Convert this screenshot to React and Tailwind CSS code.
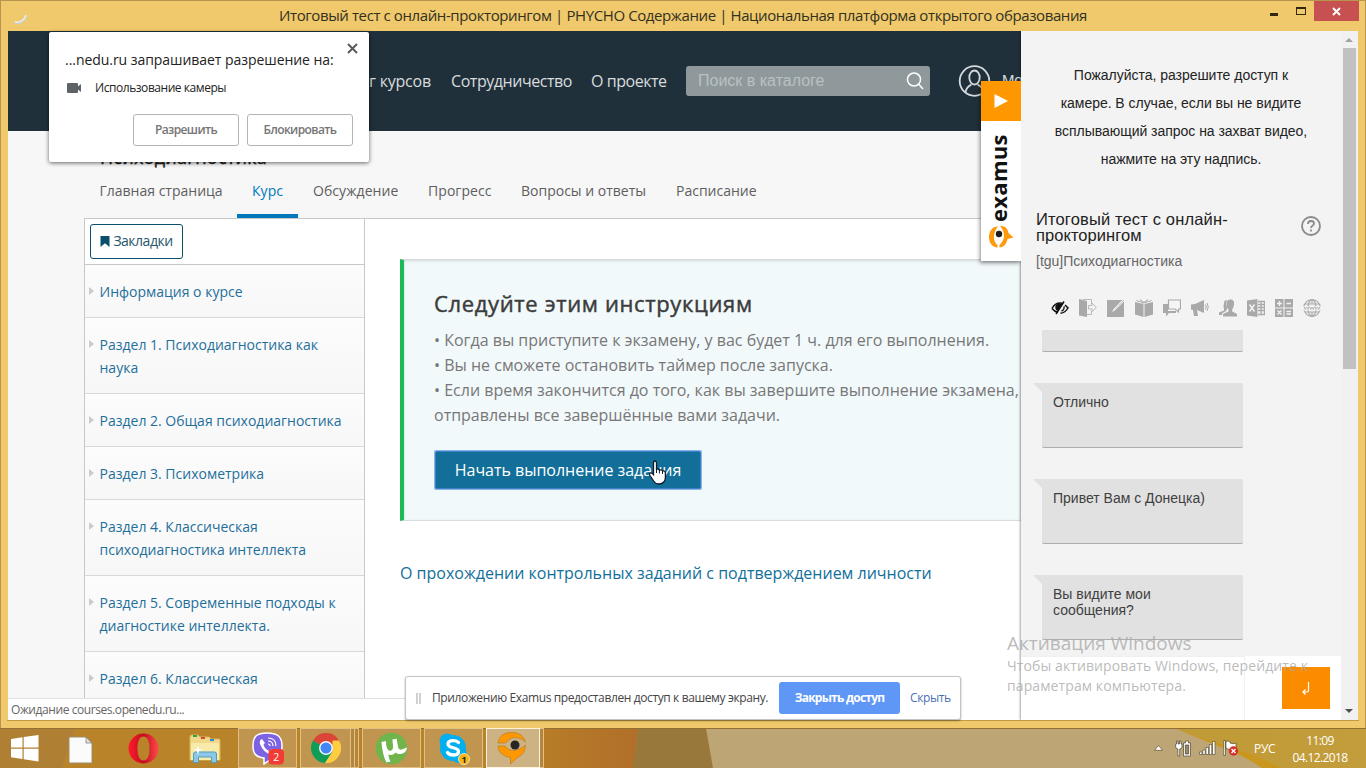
import React from "react";

const sections = [
  ["Информация о курсе"],
  ["Раздел 1. Психодиагностика как", "наука"],
  ["Раздел 2. Общая психодиагностика"],
  ["Раздел 3. Психометрика"],
  ["Раздел 4. Классическая", "психодиагностика интеллекта"],
  ["Раздел 5. Современные подходы к", "диагностике интеллекта."],
  ["Раздел 6. Классическая"],
];

function TitleBar() {
  return (
    <div className="relative flex h-[30px] shrink-0 items-center justify-center">
      <svg className="absolute left-[12px] top-[11px]" width="16" height="14" viewBox="0 0 16 14" fill="none">
        <path d="M13 3 C12 9 7 12 1.500 10.500" stroke="#cfcfc6" strokeWidth="2.600" />
        <path d="M13 3 C11.500 8 7 11 2 9.800" stroke="#f4f2e6" strokeWidth="1.200" />
      </svg>
      <span className="whitespace-nowrap pb-[2px] text-[15px] leading-[20px] tracking-[-0.400px] text-[#33301f]">
        Итоговый тест с онлайн-прокторингом | PHYCHO Содержание | Национальная платформа открытого образования
      </span>
      <div className="absolute right-[6px] top-0 flex h-[20px] items-start">
        <div className="mr-[18px] mt-[12px] h-[3px] w-[8px] bg-[#33270d]" />
        <div className="mr-[8px] mt-[6px] h-[8px] w-[10px] border border-t-2 border-[#33270d]" />
        <div className="flex h-[20px] w-[45px] items-center justify-center bg-[#c75050]">
          <svg width="9" height="9" viewBox="0 0 9 9" stroke="#fff" strokeWidth="1.900">
            <path d="M1 1L8 8M8 1L1 8" />
          </svg>
        </div>
      </div>
    </div>
  );
}

function SiteHeader() {
  return (
    <div className="flex h-[100px] shrink-0 items-center bg-[#20303a] text-[16px] tracking-[-0.450px] text-[#d8dcde]">
      <div className="w-[423px] shrink-0 whitespace-nowrap pb-px text-right tracking-[-0.200px]">Каталог курсов</div>
      <div className="ml-[20px] w-[122px] shrink-0 whitespace-nowrap pb-px tracking-[-0.450px]">Сотрудничество</div>
      <div className="ml-[18px] w-[76px] shrink-0 whitespace-nowrap pb-px">О проекте</div>
      <div className="ml-[19px] flex h-[30px] w-[244px] shrink-0 items-center justify-between rounded-[3px] bg-[#8f999b] pl-[12px] pr-[6px]">
        <span className="whitespace-nowrap font-['Liberation_Sans'] text-[16px] tracking-normal text-[#b9c1c3]">Поиск в каталоге</span>
        <svg width="18" height="20" viewBox="0 0 18 20" fill="none" stroke="#fff" strokeWidth="1.500">
          <circle cx="8" cy="8.500" r="6.500" />
          <path d="M12.500 13L17 18" />
        </svg>
      </div>
      <svg className="ml-[28px] shrink-0" width="33" height="32" viewBox="0 0 33 32" fill="none" stroke="#d5d9db" strokeWidth="1.800">
        <circle cx="16.500" cy="16" r="14.800" />
        <ellipse cx="16.500" cy="12.500" rx="5.200" ry="7" />
        <path d="M7.500 27.500C8 23.500 9.500 21.500 13.500 19.500M25.500 27.500C25 23.500 23.500 21.500 19.500 19.500" />
      </svg>
      <span className="ml-[11px] whitespace-nowrap pb-[2px] font-['Liberation_Sans'] text-[15px]">Мо</span>
    </div>
  );
}

function CourseTabs() {
  return (
    <div className="flex h-[87px] shrink-0 flex-col pl-[77px]">
      <div className="h-[47px] overflow-hidden pl-[15px] pt-[14px] text-[18px] font-medium leading-[24px] tracking-[0.250px] text-[#222] [-webkit-text-stroke:0.400px]">
        Психодиагностика
      </div>
      <div className="flex h-[40px] whitespace-nowrap text-[14px] leading-[26px] text-[#5e5e5e]">
        <div className="ml-[14px] w-[123px] pl-[0.500px]">Главная страница</div>
        <div className="ml-[15px] w-[61px] border-b-4 border-[#0079bc] text-center text-[#0079bc]">Курс</div>
        <div className="ml-[15px] w-[85px] tracking-[0.060px]">Обсуждение</div>
        <div className="ml-[30px] w-[63px] tracking-[0.060px]">Прогресс</div>
        <div className="ml-[30px] w-[125px]">Вопросы и ответы</div>
        <div className="ml-[30px]">Расписание</div>
      </div>
    </div>
  );
}

function Sidebar() {
  return (
    <div className="w-[281px] shrink-0 border-x border-[#c8c8c8] bg-white">
      <div className="h-[46px] border-b border-[#c8c8c8] pl-[5px] pt-[5px]">
        <div className="flex h-[35px] w-[93px] items-center justify-center gap-[3px] rounded-[3px] border border-[#0b4f6c] text-[14px] tracking-[-0.500px] text-[#27566b]">
          <svg width="10" height="11" viewBox="0 0 10 11" fill="#0b4f6c"><path d="M0.500 0H9.500V11L5 7.300L0.500 11Z" /></svg>
          <span className="pb-[3px]">Закладки</span>
        </div>
      </div>
      {sections.map((lines) => (
        <div key={lines[0]} className="flex border-b border-[#d9d9d9] bg-gradient-to-b from-[#fcfcfc] to-[#f7f7f7] pb-[14px] pt-[15px]">
          <svg className="ml-[4px] mt-[7px] shrink-0" width="5" height="8" viewBox="0 0 5 8" fill="#cbcbcb"><path d="M0 0L5 4L0 8Z" /></svg>
          <div className="ml-[5.500px] whitespace-nowrap text-[14px] leading-[23px] text-[#1f6f9b]">
            {lines.map((l) => <div key={l}>{l}</div>)}
          </div>
        </div>
      ))}
    </div>
  );
}

function Cursor() {
  return (
    <svg className="absolute left-[212px] top-[8px]" width="19" height="26" viewBox="0 0 19 26">
      <path d="M5.500 3Q5.500 1 7 1T8.500 3V9.200Q11 8.600 11.400 10Q14 9.300 14.500 10.900Q17.400 10.600 17.400 13V17.500Q17.400 20 15.800 22Q14.300 24 11 24Q7.500 24 6 21.500L2 15.500Q0.800 13.500 2.300 12.900Q3.800 12.500 5.500 14.600Z" fill="#fff" stroke="#111c2b" strokeWidth="1.300" />
      <path d="M8.500 9V13M11.400 10V13.500M14.500 11V14" stroke="#111c2b" />
    </svg>
  );
}

function Lesson() {
  return (
    <div className="min-w-0 flex-1 bg-white pl-[35px] pt-[40px]">
      <div className="h-[262px] overflow-hidden border-y border-l-4 border-y-[#d9dcdd] border-l-[#1fb859] bg-[#f2f9fb] pl-[30px] pt-[28px] shadow-[inset_0_1px_3px_rgba(0,0,0,0.12)]">
        <h2 className="whitespace-nowrap text-[22px] font-medium leading-[30px] tracking-[0.640px] text-[#3c3c3c] [-webkit-text-stroke:0.450px]">Следуйте этим инструкциям</h2>
        <div className="mt-[10px] whitespace-nowrap text-[16px] leading-[25px] text-[#777]">
          <p>• Когда вы приступите к экзамену, у вас будет 1 ч. для его выполнения.</p>
          <p>• Вы не сможете остановить таймер после запуска.</p>
          <p>• Если время закончится до того, как вы завершите выполнение экзамена,</p>
          <p>отправлены все завершённые вами задачи.</p>
        </div>
        <div className="mt-[22px] w-[268px] rounded-[2px] bg-[#86b4e8] p-px">
          <div className="relative flex h-[38px] items-center justify-center whitespace-nowrap rounded-[2px] border border-[#3f7fc9] bg-[#126f9a] text-[16px] tracking-[-0.020px] text-white">
            Начать выполнение задания
            <Cursor />
          </div>
        </div>
      </div>
      <div className="mt-[40px] whitespace-nowrap text-[16px] leading-[24px] text-[#126f9a]">
        О прохождении контрольных заданий с подтверждением личности
      </div>
    </div>
  );
}

function ToolIcons() {
  return (
    <div className="ml-[30px] mt-[30px] flex gap-[10px] text-[#a9a9a9]">
      <svg width="18" height="18" viewBox="0 0 18 18" fill="none" stroke="#111" strokeWidth="1.500">
        <path d="M1 9.500C4 4 8 3.500 12 4.500M1 9.500C3 12 5 13 7 13.500M14 6L17 9C15 12.500 12 14 9.500 14.300" />
        <path d="M5 15L13 2.500" />
        <path d="M5 8C5 11 6.500 11.500 7.500 10.500L10.500 5.500C8 4.500 5 5.500 5 8Z" fill="#111" />
        <path d="M13 7.500C13.500 9.500 12 11.500 10.500 12" />
      </svg>
      <svg width="18" height="18" viewBox="0 0 18 18" fill="currentColor">
        <path d="M0 0L8 2V18L0 16.500Z" />
        <path d="M4 .5H12.500V5M12.500 12V15.500H8M9.500 6.500H13V4L17.300 8.500L13 12.500V10H9.500Z" fill="none" stroke="#b8b8b8" />
      </svg>
      <svg width="18" height="18" viewBox="0 0 18 18" fill="currentColor">
        <path d="M0 1H17V18H0Z" />
        <path d="M5 13L6.500 10L15.500 .8L17.200 2.300L8 11.500Z" fill="#f2f2f2" />
        <path d="M8 10.500L16.500 1.500" stroke="#bbb" strokeWidth=".7" />
      </svg>
      <svg width="18" height="18" viewBox="0 0 18 18" fill="currentColor">
        <path d="M0 3L8.500 5V18L0 15.500ZM18 3L9.500 5V18L18 15.500Z" />
        <path d="M1.500 1.500L8.800 4L16.500 1.500M5 .5L9 3.500L13 .5" fill="none" stroke="currentColor" />
      </svg>
      <svg width="18" height="18" viewBox="0 0 18 18" fill="currentColor">
        <path d="M0 5H5V12H13V14H6L3 17.500V14H0Z" />
        <path d="M5.500 1H17.500V10H15.500V13L12 10H5.500Z" fill="#f5f5f5" stroke="currentColor" strokeWidth="1.200" />
      </svg>
      <svg width="18" height="18" viewBox="0 0 18 18" fill="currentColor">
        <path d="M0 5.500L4 5L13 1V14L6 11L7 17H3L2 11L0 10.500Z" />
        <path d="M14.500 5.500Q16 8 14.500 10.500M16 4Q18.500 8 16 12" fill="none" stroke="currentColor" />
      </svg>
      <svg width="18" height="18" viewBox="0 0 18 18" fill="currentColor">
        <path d="M5 4Q5 1 8 1L7 5L8.500 9L7 12L3 14.500V16H0V13.500L5 11.500Q5.500 10 4.500 8Z" />
        <path d="M7.500 5Q7.500 .5 11.500 .5T15 5Q15 8 13.200 10.500V12.500L18 15V17.500H4V15L9.500 12.500V10.500Q7.500 8 7.500 5Z" />
      </svg>
      <svg width="18" height="18" viewBox="0 0 18 18" fill="currentColor">
        <path d="M0 1.500L10.500 0V18L0 16.500Z" />
        <path d="M2.500 5.500L7.500 12.500M7.500 5.500L2.500 12.500" stroke="#f2f2f2" strokeWidth="1.500" />
        <path d="M11 2.500H17.500V15.500H11M11 5.500H17M11 8.500H17M11 11.500H17M14 3V15" fill="none" stroke="currentColor" strokeWidth="1.300" />
      </svg>
      <svg width="18" height="18" viewBox="0 0 18 18" fill="currentColor">
        <path d="M0 0H8.500V8.500H0ZM9.500 0H18V8.500H9.500ZM0 9.500H8.500V18H0ZM9.500 9.500H18V18H9.500Z" />
        <path d="M2 4.500H7M4.500 2V7M11.500 4.500H16M2.500 11.500L6.500 15.500M6.500 11.500L2.500 15.500M11.500 12.500H16M11.500 15H16" stroke="#f2f2f2" strokeWidth="1.400" />
      </svg>
      <svg width="18" height="18" viewBox="0 0 18 18" fill="none" stroke="currentColor" strokeWidth="1.200">
        <circle cx="9" cy="9" r="8.300" />
        <ellipse cx="9" cy="9" rx="4" ry="8.300" />
        <path d="M2 5H16M2 13H16M9 1V5M9 13V17" />
        <path d="M0 7H18V11.500H0Z" fill="#f2f2f2" stroke="none" />
        <path d="M1 7.500L2.200 10.500L3.500 8L4.800 10.500L6 7.500M6.500 7.500L7.700 10.500L9 8L10.300 10.500L11.500 7.500M12 7.500L13.200 10.500L14.500 8L15.800 10.500L17 7.500" strokeWidth=".8" />
      </svg>
    </div>
  );
}

function Message({ children }) {
  return (
    <div className="relative ml-[21px] mt-[31px] h-[65px] w-[201px] rounded-[2px] border-b border-[#adadad] bg-[#e1e1e1] pl-[11px] pt-[11px] text-[14px] leading-[16px] text-[#404040]">
      <svg className="absolute left-[-9px] top-0" width="9" height="9" viewBox="0 0 9 9" fill="#e1e1e1"><path d="M0 0H9V9Z" /></svg>
      {children}
    </div>
  );
}

function ProctorPanel() {
  return (
    <div className="flex w-[320px] shrink-0 flex-col bg-[#f3f3f3] font-['Liberation_Sans'] shadow-[-1px_0_2px_rgba(0,0,0,0.35)]">
      <div className="mt-[30px] whitespace-nowrap text-center text-[14px] leading-[28px] tracking-[-0.030px] text-[#222]">
        Пожалуйста, разрешите доступ к<br />камере. В случае, если вы не видите<br />всплывающий запрос на захват видео,<br />нажмите на эту надпись.
      </div>
      <div className="mt-[37px] flex h-[33px] justify-between pl-[15px] pr-[20px]">
        <div className="mt-[1px] whitespace-nowrap text-[16.500px] leading-[16px] tracking-[0.150px] text-[#222]">Итоговый тест с онлайн-<br /><span className="tracking-[0.050px]">прокторингом</span></div>
        <svg className="mt-[6px]" width="20" height="20" viewBox="0 0 20 20" fill="none" stroke="#8a8a8a" strokeWidth="1.800">
          <circle cx="10" cy="10" r="9" />
          <path d="M7 8Q7 5 10 5T13 7.500C13 9.500 10 9.800 10 12M10 13.500V15.500" />
        </svg>
      </div>
      <div className="mt-[10px] pl-[15px] text-[14px] leading-[16px] text-[#666]">[tgu]Психодиагностика</div>
      <ToolIcons />
      <div className="ml-[21px] mt-[13px] h-[22px] w-[201px] shrink-0 rounded-b-[2px] border-b border-[#adadad] bg-[#e1e1e1]" />
      <Message>Отлично</Message>
      <Message>Привет Вам с Донецка)</Message>
      <Message>Вы видите мои<br />сообщения?</Message>
      <div className="mt-auto flex h-[64px] shrink-0 bg-white">
        <div className="w-[224px] border-r border-t border-[#f0f0f0]" />
        <div className="ml-[37px] mt-[11px] flex h-[42px] w-[48px] items-center justify-center bg-[#fb8c00]">
          <svg width="8" height="13" viewBox="0 0 8 13" fill="none" stroke="#fff" strokeWidth="1.200">
            <path d="M6.500 0V8.500Q6.500 10 5 10H1M3.500 7.500L1 10L3.500 12.500" />
          </svg>
        </div>
      </div>
    </div>
  );
}

function Scrollbar() {
  return (
    <div className="flex w-[17px] shrink-0 flex-col items-center bg-[#f1f1f1] pr-[1px]">
      <svg className="mt-[7px]" width="8" height="4" viewBox="0 0 8 4" fill="#a3a3a3"><path d="M4 0L8 4H0Z" /></svg>
      <div className="mt-[6px] h-[321px] w-[13px] bg-[#c1c1c1]" />
      <svg className="mb-[7px] mt-auto" width="8" height="4" viewBox="0 0 8 4" fill="#505050"><path d="M0 0H8L4 4Z" /></svg>
    </div>
  );
}

function ExamusTab() {
  return (
    <div className="absolute left-[981px] top-[81px] flex h-[180px] w-[40px] flex-col items-center bg-white shadow-[-1px_2px_4px_rgba(0,0,0,0.45)] [clip-path:inset(-8px_0_-8px_-8px)]">
      <div className="flex h-[40px] w-full items-center justify-center bg-[#ff9800]">
        <svg width="14" height="14" viewBox="0 0 14 14" fill="#fff"><path d="M0.500 0L14 7L0.500 14Z" /></svg>
      </div>
      <div className="-ml-[6px] mt-[12px] flex h-[90px] w-[30px] rotate-180 items-center justify-center font-['Open_Sans'] text-[22px] font-bold leading-[30px] tracking-[0.300px] text-[#111] [writing-mode:vertical-rl]">examus</div>
      <svg className="mt-[2px]" width="26" height="24" viewBox="0 0 26 24">
        <path d="M10 1.500C4 1.500 1 6.500 1 12C1 18 4 22 9.500 22.500V20C7 18 6 15.500 6 12C6 8 7.500 4.500 10 1.500Z" fill="#ff9a0a" />
        <path d="M12 .8C18 1 19.500 4 20.500 8L25.500 12.500L19.500 14C18.500 19 16 22 11.500 22.500V20C14.500 17 16 14 16 11C16 7 14.500 4 12 .8Z" fill="#ff9a0a" />
        <circle cx="11" cy="9" r="3.200" fill="#1c1c1c" />
      </svg>
    </div>
  );
}

function PermissionPopup() {
  return (
    <div className="absolute left-[49px] top-[32px] h-[130px] w-[320px] rounded-[2px] bg-white px-[16px] shadow-[0_1px_4px_rgba(0,0,0,0.6)]">
      <svg className="absolute right-[11px] top-[11px]" width="11" height="11" viewBox="0 0 11 11" stroke="#5a5a5a" strokeWidth="2"><path d="M1 1L10 10M10 1L1 10" /></svg>
      <div className="whitespace-nowrap pt-[18px] text-[14px] leading-[20px] tracking-[-0.050px] text-[#222]">...nedu.ru запрашивает разрешение на:</div>
      <div className="mt-[10px] flex items-center">
        <svg className="ml-[2px] -mt-px" width="14" height="10" viewBox="0 0 14 10" fill="#5f6368"><path d="M1 0H10Q11 0 11 1V3.500L14 1V9L11 6.500V9Q11 10 10 10H1Q0 10 0 9V1Q0 0 1 0Z" /><path d="M10 3H13V7H10Z" /></svg>
        <span className="ml-[14px] whitespace-nowrap text-[12px] leading-[16px] tracking-[-0.450px] text-[#222]">Использование камеры</span>
      </div>
      <div className="mt-[18px] flex justify-end gap-[8px] text-[12px] font-semibold tracking-[-0.600px] text-[#757575]">
        <div className="flex h-[32px] w-[106px] items-center justify-center rounded-[3px] border border-[#b4b4b4]">Разрешить</div>
        <div className="flex h-[32px] w-[106px] items-center justify-center rounded-[3px] border border-[#b4b4b4]">Блокировать</div>
      </div>
    </div>
  );
}

function ShareBar() {
  return (
    <div className="absolute left-[405px] top-[676px] flex h-[44px] w-[556px] items-center whitespace-nowrap rounded-[3px] border border-[#c4c4c4] bg-white text-[12px] tracking-[-0.380px] text-[#444] shadow-[0_1px_2px_rgba(0,0,0,0.35)]">
      <div className="ml-[10px] h-[11px] w-[5px] shrink-0 border-x-2 border-[#d0d0d0]" />
      <span className="ml-[11px] w-[337px] shrink-0">Приложению Examus предоставлен доступ к вашему экрану.</span>
      <div className="ml-[10px] flex h-[32px] w-[121px] shrink-0 items-center justify-center rounded-[3px] bg-[#5e97f6] font-bold tracking-[-0.750px] text-white">Закрыть доступ</div>
      <span className="ml-[10px] text-[#4b6fb5]">Скрыть</span>
    </div>
  );
}

function TaskButton({ children, stacked, active }) {
  const face = active
    ? "w-[54px] border-[#fff3dc] bg-[#cdb283]"
    : stacked
      ? "w-[51px] border-[#e2bf83] bg-[#c0954f]"
      : "w-[59px] border-[#e2bf83] bg-[#c0954f]";
  return (
    <div className="flex h-[40px]">
      <div className={"flex h-[40px] items-center justify-center border " + face}>{children}</div>
      {stacked && <div className="h-[40px] w-[4px] border border-l-0 border-[#e2bf83] bg-[#b4853d]" />}
      {stacked && !active && <div className="h-[40px] w-[4px] border border-l-0 border-[#e2bf83] bg-[#b4853d]" />}
    </div>
  );
}

function Taskbar() {
  return (
    <div className="relative flex h-[40px] shrink-0 items-center overflow-hidden bg-[#b98429]">
      <svg className="absolute inset-0" width="1366" height="40" viewBox="0 0 1366 40">
        <defs>
          <linearGradient id="amber" x1="0" x2="1"><stop offset="0" stopColor="#b98127" /><stop offset="1" stopColor="#b16f29" /></linearGradient>
          <linearGradient id="gold" x1="0" x2="1"><stop offset="0" stopColor="#c09a35" /><stop offset="1" stopColor="#c39d3b" /></linearGradient>
        </defs>
        <path d="M0 0H75L62 40H0Z" fill="#af8034" />
        <path d="M510 0H638L633 40H510Z" fill="url(#amber)" />
        <path d="M638 0H706L713 40H633Z" fill="#98793b" />
        <path d="M706 0H1366V40H713Z" fill="#bda576" />
        <path d="M1175 0H1366V40H1282C1250 22 1210 14 1175 0Z" fill="url(#gold)" />
        <path d="M1175 0C1210 14 1250 22 1282 40H1262C1240 24 1205 14 1175 0Z" fill="#c9971d" />
        <path d="M0 .5H1366" stroke="#927035" />
      </svg>
      <div className="relative flex h-[40px] w-full items-center">
        <svg className="ml-[11px]" width="28" height="27" viewBox="0 0 28 27" fill="#fff"><path d="M0 4L11.500 2.300V12.500H0ZM12.700 2.100L27.500 0V12.500H12.700ZM0 13.700H11.500V24L0 22.300ZM12.700 13.700H27.500V26.500L12.700 24.200Z" /></svg>
        <svg className="ml-[29px] mt-[3px]" width="25" height="28" viewBox="0 0 25 28"><path d="M1 1H18L24 7V27H1Z" fill="#fbfbfb" stroke="#a08c68" /><path d="M18 1V7H24Z" fill="#e0e0e0" stroke="#777" strokeWidth=".7" /></svg>
        <svg className="ml-[35px]" width="31" height="31" viewBox="0 0 31 31">
          <defs><linearGradient id="opera" x1="0" x2="1"><stop offset="0" stopColor="#ff1b2d" /><stop offset=".5" stopColor="#c40d1e" /><stop offset="1" stopColor="#ff4a4a" /></linearGradient></defs>
          <path fillRule="evenodd" d="M15.500 .5A15 15 0 1 0 15.500 30.500A15 15 0 1 0 15.500 .5ZM15.500 3.500C20 3.500 21.500 9.500 21.500 15.500S20 27.500 15.500 27.500S9.500 21.500 9.500 15.500S11 3.500 15.500 3.500Z" fill="url(#opera)" />
        </svg>
        <svg className="ml-[30px]" width="32" height="31" viewBox="0 0 32 31">
          <path d="M1 4Q1 2 3 2H9L11 4H20L22 6H30Q31 6 31 8V27H1Z" fill="#f0d98a" stroke="#d9b85b" />
          <path d="M2 10H30V27H2Z" fill="#f8eba9" />
          <path d="M4 2H8V4H4Z" fill="#27a845" /><path d="M12 4H16V6H12Z" fill="#d44a3a" /><path d="M21 6H25V8H21Z" fill="#2f86d9" />
          <path d="M4.500 29.500V21Q4.500 19 6.500 19H25.500Q27.500 19 27.500 21V29.500H22.500V24H9.500V29.500Z" fill="#8cc7e6" stroke="#4f9ec4" />
          <path d="M9 12L10 16L14 17L10 18L9 22L8 18L4 17L8 16Z" fill="#fff" />
        </svg>
        <div className="ml-[17px] flex gap-[3px]">
          <TaskButton>
            <svg width="34" height="33" viewBox="0 0 34 33">
              <path d="M16 1C26 1 31 4 31 14C31 22 28 26 20 27L13 32V26C5 25 2 22 2 14C2 4 6 1 16 1Z" fill="#7d62e4" stroke="#fff" strokeWidth="1.500" />
              <path d="M11 7Q8 8 9 12Q12 20 20 23Q23 24 24 20L20 17L18 19Q13 16 12.500 12.500L14 11Z" fill="#fff" />
              <path d="M17 6Q25 6 25 14M17 9Q22 9 22 14M17 12Q19 12 19 14" fill="none" stroke="#fff" strokeWidth="1.200" />
              <rect x="17.500" y="17" width="15.500" height="15.500" rx="4" fill="#f23b35" />
              <text x="25.200" y="28.500" textAnchor="middle" fontSize="10.500" fill="#fff">2</text>
            </svg>
          </TaskButton>
          <TaskButton stacked>
            <svg width="30" height="30" viewBox="0 0 30 30">
              <path d="M15 15L2 7.500A15 15 0 0 1 28 7.500Z" fill="#db4437" /><path d="M2 7.500A15 15 0 0 0 14 30L21.500 18.700L15 15Z" fill="#109d58" /><path d="M28 7.500A15 15 0 0 1 14 30L21.500 18.700V7.500Z" fill="#ffcd40" />
              <circle cx="15" cy="15" r="7" fill="#f6f6f6" /><circle cx="15" cy="15" r="5.500" fill="#4285f4" />
            </svg>
          </TaskButton>
          <TaskButton>
            <svg width="33" height="33" viewBox="0 0 33 33">
              <circle cx="16.500" cy="16.500" r="15.800" fill="#6fb54c" />
              <path d="M6.500 10L11 9C11 14 12 17.500 14 18.500C17 19.500 18.500 17 18 13L17.300 7.500L21.700 6.800L23 14.500C23.500 18 26 18.500 28 17L32 15.500C31.500 19 30 20.500 27.500 21.500C24.500 22.500 22 22 20.500 20.500C18.500 23 16 23.500 13.500 22.500C13.500 25 14.500 27.500 15.500 29.500L11.500 30.500C8.500 25 7 17 6.500 10Z" fill="#fff" />
            </svg>
          </TaskButton>
          <TaskButton>
            <svg width="32" height="33" viewBox="0 0 32 33">
              <circle cx="15" cy="16" r="13" fill="#00aff0" /><circle cx="9" cy="9" r="7.500" fill="#00aff0" /><circle cx="21" cy="23" r="8" fill="#00aff0" />
              <path d="M20.500 10.500C18 7.500 10 8 10 12C10 17 20.500 14.500 20.500 19.500C20.500 24 12 24 9.500 20.500" fill="none" stroke="#fff" strokeWidth="3.300" strokeLinecap="round" />
              <circle cx="26" cy="27" r="5.500" fill="#fcb415" stroke="#fff0c0" strokeWidth=".8" />
              <text x="26" y="30.500" textAnchor="middle" fontSize="9" fontWeight="bold" fill="#222">1</text>
            </svg>
          </TaskButton>
          <TaskButton stacked active>
            <svg className="-ml-[2px]" width="30" height="34" viewBox="0 0 30 34">
              <path d="M1 12C2 5 7 1.500 15 1.500S27 6 28.500 11C23 5.500 14 5 10 10.500L8 12Z" fill="#ff9800" stroke="#a9782c" strokeWidth=".6" />
              <path d="M1 15H8C12 21 21 21 28.500 14C28 20 26 24 21 26L13.500 33V26.500C5 25 1.500 21 1 15Z" fill="#ff9800" stroke="#a9782c" strokeWidth=".6" />
              <circle cx="18" cy="14" r="4.500" fill="#282523" />
            </svg>
          </TaskButton>
        </div>
        <div className="ml-auto flex h-full items-center text-[12px] text-white">
          <svg width="9" height="6" viewBox="0 0 9 6" fill="#fff" stroke="#60512f" strokeWidth=".7"><path d="M4.500 .5L8.500 5.300H.5Z" /></svg>
          <svg className="ml-[12px]" width="17" height="17" viewBox="0 0 17 17" stroke="#33301f" strokeWidth=".6">
            <path d="M1.500 1H3V4H4.500V1H6V4H7V7Q7 8.500 4.700 9V16H2.900V9Q.7 8.500 .7 7V4H1.500Z" fill="#fff" />
            <path d="M8.500 3H10.500V1H13.500V3H15.500V16H8.500Z" fill="#fff" /><path d="M10.300 5H13.700V14H10.300Z" fill="#9b8761" />
          </svg>
          <svg className="ml-[7px]" width="17" height="14" viewBox="0 0 17 14" fill="#fff" stroke="#4b412a" strokeWidth=".6"><path d="M.5 11H3V13.500H.5ZM3.800 9H6.200V13.500H3.800ZM7 6.500H9.500V13.500H7ZM10.300 3.500H12.700V13.500H10.300ZM13.500 .5H16V13.500H13.500Z" /></svg>
          <svg className="ml-[7px]" width="16" height="16" viewBox="0 0 16 16">
            <path d="M.8 .5H2.500V15.500H.8ZM3 1.500Q5 .5 7 1.500V3Q10 4.500 13 3V9Q9 11 3 8.500Z" fill="#fff" stroke="#40381f" strokeWidth=".6" />
            <circle cx="10.500" cy="11" r="4.700" fill="#d7302b" /><path d="M8.500 9L12.500 13M12.500 9L8.500 13" stroke="#fff" strokeWidth="1.400" />
          </svg>
          <span className="ml-[15px] mt-[2px] w-[24px] whitespace-nowrap tracking-[-0.300px]">РУС</span>
          <div className="ml-[14px] mr-[18px] mt-px w-[56px] whitespace-nowrap text-center leading-[17px] tracking-[-0.600px]">
            <div>11:09</div>
            <div>04.12.2018</div>
          </div>
        </div>
      </div>
    </div>
  );
}

export default function App() {
  return (
    <div className="relative flex h-[768px] w-[1366px] flex-col overflow-hidden font-['Open_Sans','Noto_Sans',sans-serif]">
      <div className="flex h-[728px] flex-col border border-b-0 border-[#b8954c] bg-[#efc96c]">
        <TitleBar />
        <div className="mx-[7px] flex h-[689px] shrink-0 overflow-hidden">
          <div className="flex w-[1013px] shrink-0 flex-col overflow-hidden bg-[#f7f7f7]">
            <SiteHeader />
            <CourseTabs />
            <div className="ml-[76px] flex min-h-0 flex-1 border-t border-[#c8c8c8]">
              <Sidebar />
              <Lesson />
            </div>
          </div>
          <ProctorPanel />
          <Scrollbar />
        </div>
        <div className="mx-[6px] h-px bg-[#c09a45]" />
      </div>
      <Taskbar />
      <div className="absolute left-[8px] top-[698px] h-[22px] w-[442px] whitespace-nowrap border-r border-t border-[#e0e0e0] bg-white pl-[3px] text-[12px] leading-[22px] tracking-[-0.420px] text-[#666]">
        Ожидание courses.openedu.ru...
      </div>
      <ExamusTab />
      <PermissionPopup />
      <ShareBar />
      <div className="absolute left-[1007px] top-[630px] whitespace-nowrap text-[#a9a9a9]/80">
        <div className="text-[19px] leading-[26px]">Активация Windows</div>
        <div className="text-[14px] leading-[20px] tracking-[0.100px]">Чтобы активировать Windows, перейдите к<br />параметрам компьютера.</div>
      </div>
    </div>
  );
}
